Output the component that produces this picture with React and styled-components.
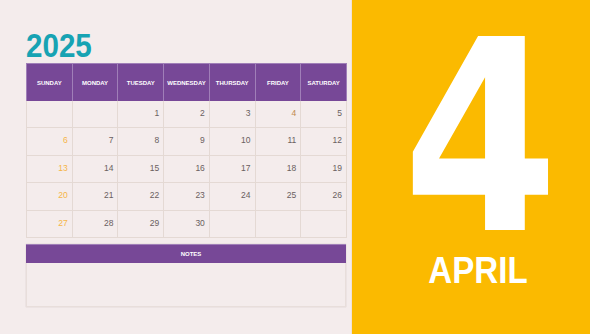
import React from "react";
import styled, { createGlobalStyle } from "styled-components";

const Global = createGlobalStyle`
  html, body { margin: 0; padding: 0; }
  body { background: #f4ecec; font-family: "Liberation Sans", Arial, sans-serif; }
`;

const Page = styled.div`
  display: flex;
  width: 590px;
  height: 334px;
  overflow: hidden;
`;

const Left = styled.div`
  width: 352px;
  box-sizing: border-box;
  padding: 28px 6px 0 26px;
  display: flex;
  flex-direction: column;
  background: #f4ecec;
  border-right: 1px solid #f0e2d8;
`;

const Year = styled.div`
  font-family: "Liberation Sans", Arial, sans-serif;
  font-weight: 700;
  font-size: 34px;
  line-height: 34px;
  color: #17a3b3;
  transform: scaleX(0.87);
  transform-origin: left center;
  margin-bottom: 1px;
`;

const Grid = styled.div`
  display: grid;
  grid-template-columns: repeat(7, 1fr);
  width: 320px;
  border-left: 1px solid #e4d9d4;
`;

const HeadCell = styled.div`
  height: 37px;
  background: #774897;
  color: #fff;
  font-weight: 700;
  font-size: 6px;
  display: flex;
  align-items: center;
  justify-content: center;
  border-right: 1px solid #a07fb8;
  border-top: 1px solid #a07fb8;
  &:first-child { margin-left: -1px; border-left: 1px solid #a07fb8; }
`;

const Cell = styled.div`
  height: 27.4px;
  box-sizing: border-box;
  border-right: 1px solid #e4d9d4;
  border-bottom: 1px solid #e4d9d4;
  font-size: 8.5px;
  line-height: 10px;
  padding: 7px 4px 0 0;
  text-align: right;
  color: ${(p) => (p.$tone === "sun" ? "#f4b548" : p.$tone === "hol" ? "#c08a4c" : "#6a6060")};
`;

const Notes = styled.div`
  margin-top: 6px;
  width: 320px;
  display: flex;
  flex-direction: column;
  box-shadow: 0 0 1px rgba(120, 90, 90, 0.35);
`;

const NotesHead = styled.div`
  height: 18px;
  background: #774897;
  color: #fff;
  font-size: 6px;
  font-weight: 700;
  display: flex;
  align-items: center;
  justify-content: center;
  padding-left: 10px;
  border-top: 1px solid #a07fb8;
`;

const NotesBody = styled.div`
  height: 43px;
  border: 1px solid #e8dedb;
  border-top: none;
`;

const Right = styled.div`
  flex: 1;
  background: #fbba00;
  display: flex;
  flex-direction: column;
  align-items: center;
  padding: 30px 0 0 20px;
  box-sizing: border-box;
`;

const BigNum = styled.div`
  font-family: "DejaVu Sans", sans-serif;
  font-weight: 700;
  font-size: 266px;
  line-height: 216px;
  height: 216px;
  color: #fff;
  transform: scaleX(0.84);
`;

const Month = styled.div`
  margin-top: 7px;
  margin-left: -6px;
  font-family: "Liberation Sans", Arial, sans-serif;
  font-weight: 700;
  font-size: 36px;
  line-height: 36px;
  color: #fff;
  transform: scaleX(0.92);
`;

const days = ["SUNDAY", "MONDAY", "TUESDAY", "WEDNESDAY", "THURSDAY", "FRIDAY", "SATURDAY"];

const cells = [];
for (let i = 0; i < 35; i++) {
  const d = i - 1;
  cells.push(d >= 1 && d <= 30 ? d : null);
}

export default function App() {
  return (
    <Page>
      <Global />
      <Left>
        <Year>2025</Year>
        <Grid>
          {days.map((d) => (
            <HeadCell key={d}>{d}</HeadCell>
          ))}
          {cells.map((d, i) => (
            <Cell key={i} $tone={d && i % 7 === 0 ? "sun" : d === 4 ? "hol" : ""}>
              {d || ""}
            </Cell>
          ))}
        </Grid>
        <Notes>
          <NotesHead>NOTES</NotesHead>
          <NotesBody />
        </Notes>
      </Left>
      <Right>
        <BigNum>4</BigNum>
        <Month>APRIL</Month>
      </Right>
    </Page>
  );
}
